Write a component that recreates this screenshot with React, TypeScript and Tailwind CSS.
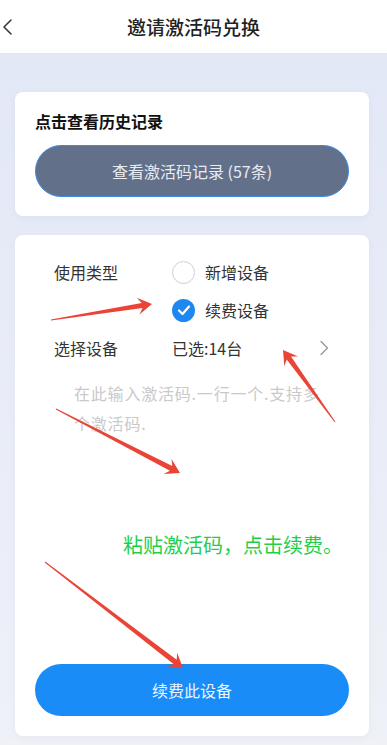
import React from "react";

type Pt = [number, number];

// red annotation arrow: thin tail, swept-back head
function arrowPoints(tail: Pt, tip: Pt, headLen = 14, headHalf = 8.5, neckHalf = 2.6) {
  const dx = tip[0] - tail[0];
  const dy = tip[1] - tail[1];
  const len = Math.hypot(dx, dy);
  const ux = dx / len;
  const uy = dy / len;
  const nx = -uy;
  const ny = ux;
  const neck: Pt = [tip[0] - ux * (headLen - 4), tip[1] - uy * (headLen - 4)];
  const wing: Pt = [tip[0] - ux * headLen, tip[1] - uy * headLen];
  const pts: Pt[] = [
    [tail[0] + nx * 0.5, tail[1] + ny * 0.5],
    [neck[0] + nx * neckHalf, neck[1] + ny * neckHalf],
    [wing[0] + nx * headHalf, wing[1] + ny * headHalf],
    tip,
    [wing[0] - nx * headHalf, wing[1] - ny * headHalf],
    [neck[0] - nx * neckHalf, neck[1] - ny * neckHalf],
    [tail[0] - nx * 0.5, tail[1] - ny * 0.5],
  ];
  return pts.map((p) => `${p[0].toFixed(1)},${p[1].toFixed(1)}`).join(" ");
}

const arrows: { tail: Pt; tip: Pt }[] = [
  { tail: [51, 320], tip: [152, 304] },
  { tail: [335, 422], tip: [283, 350] },
  { tail: [56, 409], tip: [180, 473] },
  { tail: [45, 562], tip: [183, 668] },
];

function Radio({ checked }: { checked?: boolean }) {
  if (checked) {
    return (
      <span className="flex h-[23px] w-[23px] items-center justify-center rounded-full bg-[#1e88f0]">
        <svg width="14" height="14" viewBox="0 0 14 14" fill="none">
          <polyline points="2,7.5 5.5,11 12,3.5" stroke="#fff" strokeWidth="2.2" strokeLinecap="round" strokeLinejoin="round" />
        </svg>
      </span>
    );
  }
  return <span className="h-[23px] w-[23px] rounded-full border-[1.5px] border-[#cfcfcf] bg-white" />;
}

export default function App() {
  return (
    <div className="relative flex h-[745px] w-[387px] flex-col overflow-hidden font-['Noto_Sans_CJK_SC','Noto_Sans',sans-serif]">
      {/* header */}
      <div className="flex h-[53px] shrink-0 items-center bg-white px-[2px]">
        <svg width="24" height="24" viewBox="0 0 24 24" fill="none" className="shrink-0">
          <polyline points="9,5 2,12 9,19" stroke="#333" strokeWidth="1.5" strokeLinecap="round" strokeLinejoin="round" />
        </svg>
        <div className="flex-1 text-center text-[19px] font-medium leading-none text-[#222]">邀请激活码兑换</div>
        <div className="w-[24px] shrink-0" />
      </div>

      <div className="flex flex-1 flex-col gap-[19px] bg-gradient-to-b from-[#e3e8f7] to-[#eff1f7] pb-[9px] pl-[15px] pr-[18px] pt-[39px]">
        {/* history card */}
        <div className="flex flex-col rounded-[8px] bg-white px-[20px] pb-[19px] pt-[17px] shadow-[0_2px_8px_rgba(60,80,140,0.05)]">
          <div className="text-[16px] font-bold leading-[24px] text-[#111]">点击查看历史记录</div>
          <button className="mt-[12px] h-[52px] rounded-full border border-[#3a8ae6] bg-[#627089] text-[16px] text-[#e8ecf2]">
            查看激活码记录 (57条)
          </button>
        </div>

        {/* redeem card */}
        <div className="flex h-[501px] flex-col rounded-[8px] bg-white pt-[18px] shadow-[0_2px_8px_rgba(60,80,140,0.05)]">
          <div className="flex h-[38px] items-center px-[39px] text-[16px] text-[#333]">
            <span className="w-[118px]">使用类型</span>
            <span className="flex items-center gap-[10px]">
              <Radio />
              新增设备
            </span>
          </div>
          <div className="flex h-[38px] items-center px-[39px] text-[16px] text-[#333]">
            <span className="w-[118px]" />
            <span className="flex items-center gap-[10px]">
              <Radio checked />
              续费设备
            </span>
          </div>
          <div className="flex h-[38px] items-center pl-[39px] pr-[40px] text-[16px] text-[#333]">
            <span className="w-[118px]">选择设备</span>
            <span className="flex-1">已选:14台</span>
            <svg width="10" height="16" viewBox="0 0 10 16" fill="none">
              <polyline points="2,1.5 8.5,8 2,14.5" stroke="#999" strokeWidth="1.4" strokeLinecap="round" strokeLinejoin="round" />
            </svg>
          </div>
          <textarea
            className="ml-[59px] mt-[11px] w-[252px] flex-1 resize-none bg-transparent p-0 text-[16px] leading-[30px] tracking-[0.8px] text-[#333] outline-none placeholder:text-[#c9c9c9]"
            placeholder="在此输入激活码.一行一个.支持多个激活码."
          />
          <button className="mx-[20px] mb-[20px] mt-[8px] h-[52px] shrink-0 rounded-full bg-[#1a8cf8] text-[16px] text-[#eef5ff]">
            续费此设备
          </button>
        </div>
      </div>

      {/* annotations */}
      <div className="pointer-events-none absolute left-[123px] top-[532px] text-[20px] leading-[26px] text-[#1fcf4b]">
        粘贴激活码，点击续费。
      </div>
      <svg className="pointer-events-none absolute inset-0" width="387" height="745" viewBox="0 0 387 745">
        {arrows.map((a, i) => (
          <polygon key={i} points={arrowPoints(a.tail, a.tip)} fill="#ea4437" />
        ))}
      </svg>
    </div>
  );
}
